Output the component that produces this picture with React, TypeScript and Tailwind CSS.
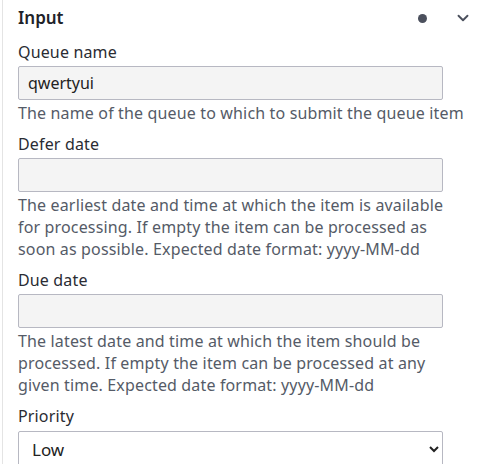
import { ChevronDown } from 'lucide-react';

const fields = [
  {
    label: 'Queue name',
    value: 'qwertyui',
    help: 'The name of the queue to which to submit the queue item',
  },
  {
    label: 'Defer date',
    value: '',
    help: 'The earliest date and time at which the item is available for processing. If empty the item can be processed as soon as possible. Expected date format: yyyy-MM-dd',
  },
  {
    label: 'Due date',
    value: '',
    help: 'The latest date and time at which the item should be processed. If empty the item can be processed at any given time. Expected date format: yyyy-MM-dd',
  },
];

export default function App() {
  return (
    <div className="w-[480px] h-[464px] overflow-hidden bg-white font-['Noto_Sans',sans-serif] text-[#1f2229]">
      <div className="ml-[2px] h-full border-l border-[#e4e4e4] pl-[15px]">
        {/* Header */}
        <div className="flex h-[36px] items-center">
          <span className="text-[17px] font-semibold">Input</span>
          <span className="ml-auto mr-[27px] h-[9px] w-[9px] rounded-full bg-[#4b505d]" />
          <ChevronDown className="mr-[8px] h-[18px] w-[18px] text-[#4b505d]" strokeWidth={2.5} />
        </div>

        {/* Fields */}
        <div className="w-[450px] pt-[5px] text-[16px] leading-[22px] tracking-[0.15px]">
          {fields.map((f) => (
            <div key={f.label} className="mb-[9px]">
              <label className="block text-[#2a2c33]">{f.label}</label>
              <input
                readOnly
                value={f.value}
                className="mt-[3px] h-[34px] w-[425px] rounded-[2px] border border-[#b7b8c2] bg-[#f4f4f4] px-[9px] text-[16px] tracking-normal text-[#222] outline-none"
              />
              <p className="mt-[2px] text-[#555b67]">{f.help}</p>
            </div>
          ))}

          <div>
            <label className="block text-[#2a2c33]">Priority</label>
            <select
              defaultValue="Low"
              className="mt-[4px] h-[36px] w-[425px] rounded-[2px] border border-[#b7b8c2] bg-white px-[9px] text-[17px] tracking-normal text-[#222]"
            >
              <option>Low</option>
              <option>Normal</option>
              <option>High</option>
            </select>
          </div>
        </div>
      </div>
    </div>
  );
}
